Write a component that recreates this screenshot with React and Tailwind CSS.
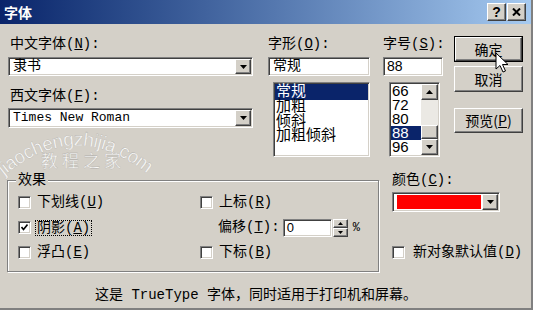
const sunken = 'border border-t-[#808080] border-l-[#808080] border-b-white border-r-white shadow-[inset_1px_1px_0_#404040,inset_-1px_-1px_0_#d4d0c8]'
const raised = 'border border-t-white border-l-white border-b-[#404040] border-r-[#404040] shadow-[inset_-1px_-1px_0_#808080,inset_1px_1px_0_#d4d0c8]'

function Key({ k }) {
  return <span className="underline">{k}</span>
}

function Tri({ up, small }) {
  const w = small ? 5 : 7
  const h = small ? 3 : 4
  return (
    <svg width={w} height={h} viewBox={`0 0 ${w} ${h}`}>
      <path d={up ? `M${w / 2} 0 L${w} ${h} L0 ${h} Z` : `M0 0 L${w} 0 L${w / 2} ${h} Z`} fill="#000" />
    </svg>
  )
}

function Combo({ className, children }) {
  return (
    <div className={`${sunken} bg-white flex items-stretch p-[1px] ${className}`}>
      <div className="flex-1 flex items-center pl-[3px] min-w-0">{children}</div>
      <div className={`${raised} w-[16px] bg-[#d4d0c8] flex items-center justify-center`}>
        <Tri />
      </div>
    </div>
  )
}

function Btn({ children, def, className }) {
  return (
    <div className={`${def ? 'border border-black' : ''} ${className}`}>
      <div className={`${raised} bg-[#d4d0c8] w-full h-full flex items-center justify-center`}>{children}</div>
    </div>
  )
}

function Check({ checked }) {
  return (
    <span className={`${sunken} w-[13px] h-[13px] bg-white flex items-center justify-center shrink-0`}>
      {checked && (
        <svg width="7" height="7" viewBox="0 0 7 7">
          <polyline points="0.5,3 2.5,5.5 6.5,0.5" fill="none" stroke="#000" strokeWidth="1.6" />
        </svg>
      )}
    </span>
  )
}

function CheckRow({ label, k, className = '', checked, focus }) {
  return (
    <div className={`h-[25px] flex items-center ${focus ? 'gap-[4px]' : 'gap-[6px]'} ${className}`}>
      <Check checked={checked} />
      <span className={focus ? 'border border-dotted border-black px-[1px] leading-[14px]' : ''}>
        {label}(<Key k={k} />)
      </span>
    </div>
  )
}

export default function App() {
  const sizes = ['66', '72', '80', '88', '96']
  return (
    <div className="w-[533px] h-[310px] bg-[#d4d0c8] relative overflow-hidden border-b-2 border-b-[#808080] border-r-2 border-r-[#808080] text-[14px] text-black font-['Liberation_Mono','Noto_Sans_CJK_SC',monospace]">
      <div className="h-[24px] bg-linear-to-r from-[#0a246a] to-[#a6caf0] flex items-center pl-[4px] pr-[5px]">
        <span className="text-white font-bold text-[14px] font-['Noto_Sans_CJK_SC',sans-serif]">字体</span>
        <div className="ml-auto flex gap-[1px]">
          <div className={`${raised} bg-[#d4d0c8] w-[19px] h-[18px] flex items-center justify-center font-bold text-[14px] font-['Liberation_Sans',sans-serif]`}>?</div>
          <div className={`${raised} bg-[#d4d0c8] w-[19px] h-[18px] flex items-center justify-center`}>
            <svg width="9" height="8" viewBox="0 0 9 8">
              <path d="M1 0.5 L8 7.5 M8 0.5 L1 7.5" stroke="#000" strokeWidth="2" />
            </svg>
          </div>
        </div>
      </div>

      <div className="flex items-start pt-[12px]">
        <div className="ml-[8px] w-[245px]">
          <div className="h-[21px] leading-[17px] pl-[2px]">中文字体(<Key k="N" />):</div>
          <Combo className="h-[19px]">隶书</Combo>
          <div className="mt-[12px] h-[20px] leading-[17px] pl-[2px]">西文字体(<Key k="F" />):</div>
          <Combo className="h-[20px]">
            <span className="text-[13px]">Times New Roman</span>
          </Combo>
        </div>

        <div className="ml-[15px] w-[102px]">
          <div className="h-[21px] leading-[17px] whitespace-nowrap">字形(<Key k="O" />):</div>
          <div className={`${sunken} bg-white h-[19px] flex items-center pl-[4px]`}>常规</div>
          <div className={`${sunken} bg-white mt-[6px] ml-[5px] w-[97px] h-[75px] p-[1px] text-[15px] leading-[15px]`}>
            <div className="h-[16px] bg-[#0a246a] text-white pl-[1px] flex items-center">常规</div>
            <div className="h-[15px] pl-[1px]">加粗</div>
            <div className="h-[14px] pl-[1px]">倾斜</div>
            <div className="h-[15px] pl-[1px]">加粗倾斜</div>
          </div>
        </div>

        <div className="ml-[13px] w-[60px]">
          <div className="h-[21px] leading-[17px] whitespace-nowrap">字号(<Key k="S" />):</div>
          <div className={`${sunken} bg-white h-[19px] flex items-center pl-[3px] font-['Liberation_Sans',sans-serif]`}>88</div>
          <div className={`${sunken} bg-white mt-[6px] ml-[6px] w-[51px] h-[75px] p-[1px] flex font-['Liberation_Sans',sans-serif] text-[15px]`}>
            <div className="flex-1 flex flex-col">
              {sizes.map(s => (
                <div
                  key={s}
                  className={`h-[14px] leading-[14px] pl-[1px] ${s === '88' ? 'bg-[#0a246a] text-white' : ''}`}
                >
                  {s}
                </div>
              ))}
            </div>
            <div className="w-[17px] flex flex-col bg-[#ebe9e4]">
              <div className={`${raised} bg-[#d4d0c8] h-[16px] flex items-center justify-center`}><Tri up /></div>
              <div className="flex-1 flex flex-col justify-end">
                <div className={`${raised} bg-[#d4d0c8] h-[14px]`} />
              </div>
              <div className={`${raised} bg-[#d4d0c8] h-[16px] flex items-center justify-center`}><Tri /></div>
            </div>
          </div>
        </div>

        <div className="ml-[11px] w-[69px] flex flex-col font-['Noto_Sans_CJK_SC',sans-serif]">
          <Btn def className="h-[26px]">确定</Btn>
          <Btn className="mt-[4px] h-[26px]">取消</Btn>
          <Btn className="mt-[16px] h-[25px]">
            <span>预览(<Key k="P" />)</span>
          </Btn>
        </div>
      </div>

      <div className="flex items-start mt-[15px]">
        <fieldset className="ml-[7px] w-[372px] border border-[#808080] shadow-[1px_1px_0_#fff,inset_1px_1px_0_#fff] pb-[6px]">
          <legend className="ml-[8px] px-[2px] h-[16px] leading-[16px] bg-[#d4d0c8]">效果</legend>
          <div className="grid grid-cols-[192px_1fr] pt-[2px]">
            <CheckRow label="下划线" k="U" className="pl-[10px]" />
            <CheckRow label="上标" k="R" />
            <CheckRow label="阴影" k="A" className="pl-[10px]" checked focus />
            <div className="h-[25px] flex items-center pl-[18px]">
              <span>偏移(<Key k="T" />):</span>
              <div className={`${sunken} bg-white ml-[3px] w-[49px] h-[18px] flex items-center pl-[3px] font-['Liberation_Sans',sans-serif] text-[13px]`}>0</div>
              <div className="w-[15px] h-[18px] flex flex-col ml-[1px]">
                <div className={`${raised} bg-[#d4d0c8] h-[9px] flex items-center justify-center`}><Tri up small /></div>
                <div className={`${raised} bg-[#d4d0c8] h-[9px] flex items-center justify-center`}><Tri small /></div>
              </div>
              <span className="ml-[5px] text-[12px]">%</span>
            </div>
            <CheckRow label="浮凸" k="E" className="pl-[10px]" />
            <CheckRow label="下标" k="B" />
          </div>
        </fieldset>

        <div className="ml-[13px] flex flex-col">
          <div className="h-[16px] leading-[16px]">颜色(<Key k="C" />):</div>
          <Combo className="mt-[4px] w-[108px] h-[20px]">
            <div className="h-[14px] w-full mr-[1px] bg-[#ff0000]" />
          </Combo>
          <div className="mt-[32px] h-[16px] flex items-center gap-[8px]">
            <Check />
            <span>新对象默认值(<Key k="D" />)</span>
          </div>
        </div>
      </div>

      <div className="mt-[15px] pl-[95px] h-[16px] leading-[16px] whitespace-pre">
        这是 TrueType 字体，同时适用于打印机和屏幕。
      </div>

      <svg className="absolute left-0 top-0 pointer-events-none" width="533" height="310">
        <defs>
          <path id="wm-arc" d="M4 176 Q78 114 152 178" />
        </defs>
        <text fontFamily="Liberation Sans, sans-serif" fontSize="19" fill="#fff" fillOpacity="0.9" stroke="#a9a7a2" strokeWidth="0.3">
          <textPath href="#wm-arc" textLength="158" lengthAdjust="spacing">jiaochengzhijia.com</textPath>
        </text>
        <text x="41" y="167" fontFamily="Noto Sans CJK SC, sans-serif" fontSize="17" letterSpacing="4" fill="#fff" fillOpacity="0.9" stroke="#a9a7a2" strokeWidth="0.3">
          教程之家
        </text>
        <path
          d="M496 53 L496 69 L500 65.5 L503 72 L505.5 71 L502.5 64.5 L508 64.5 Z"
          fill="#fff"
          stroke="#000"
          strokeWidth="1"
        />
      </svg>
    </div>
  )
}
